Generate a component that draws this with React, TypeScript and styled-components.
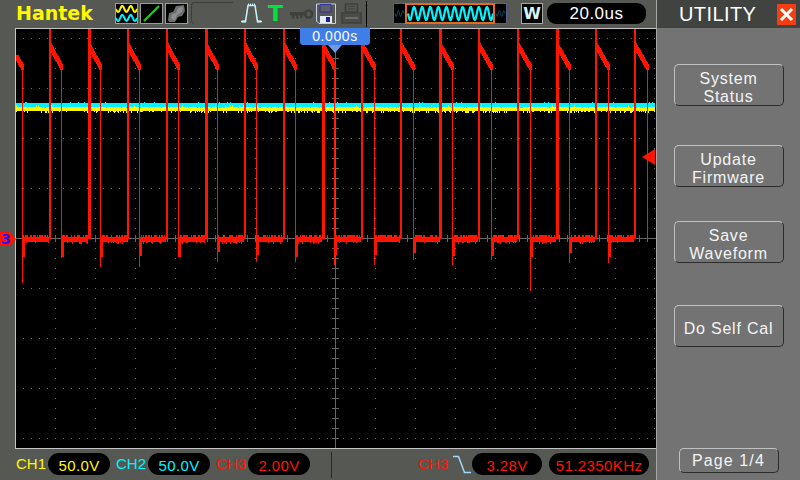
import React from 'react'
import styled, { createGlobalStyle } from 'styled-components'

const bezel = '#565853'
const panel_bg = '#737373'
const panel_head = '#40433f'
const red = '#ff1400'
const cyan = '#00f4ff'
const yellow = '#fff800'
const ui_font = '"Liberation Sans", Arial, sans-serif'

const GlobalStyle = createGlobalStyle`
  html, body {
    margin: 0;
    padding: 0;
    background: ${bezel};
  }
`

const Screen = styled.div`
  width: 800px;
  height: 480px;
  display: flex;
  overflow: hidden;
  font-family: ${ui_font};
`

const Main = styled.div`
  width: 656px;
  height: 480px;
  display: flex;
  flex-direction: column;
  background: ${bezel};
`

const TopBar = styled.div`
  height: 28px;
  box-sizing: border-box;
  padding: 3px 0 4px 16px;
  display: flex;
  align-items: stretch;
`

const Logo = styled.div`
  width: 78px;
  margin-top: -1px;
  color: ${yellow};
  font-family: 'DejaVu Sans', sans-serif;
  font-weight: bold;
  font-size: 19px;
  line-height: 22px;
  white-space: nowrap;
`

const IconBox = styled.div<{ $ml?: number }>`
  width: 23px;
  height: 21px;
  box-sizing: border-box;
  margin-left: ${({ $ml }) => $ml ?? 2}px;
  border: 1px solid #9c9c9c;
  background: #000;
  display: flex;
  align-items: center;
  justify-content: center;
`

const EmptySlot = styled.div`
  width: 42px;
  height: 22px;
  margin: -1px 0 0 3px;
  box-sizing: border-box;
  border: 1px solid #3c3e3b;
  border-width: 1px 0 0 1px;
  border-radius: 4px 0 0 4px;
`

const Glyph = styled.svg<{ $ml: number; $w: number }>`
  width: ${({ $w }) => $w}px;
  height: 21px;
  margin-left: ${({ $ml }) => $ml}px;
  flex: none;
`

const TriggerT = styled.div`
  width: 14px;
  margin-left: 6px;
  color: #00e43c;
  font-family: 'DejaVu Sans', sans-serif;
  font-weight: bold;
  font-size: 22px;
  line-height: 21px;
  text-align: center;
`

const TopSeparator = styled.div`
  width: 1px;
  margin: -2px 0 -3px 4px;
  background: #000;
`

const Overview = styled.div`
  width: 114px;
  height: 21px;
  margin-left: 26px;
  position: relative;
  box-sizing: border-box;
  border: 1px solid #5c5c94;
  background: #000;
`

const OverviewWindow = styled.div`
  position: absolute;
  left: 11px;
  top: -1px;
  width: 90px;
  height: 21px;
  box-sizing: border-box;
  border: 2px solid #e86a20;
`

const ModeBox = styled.div`
  width: 22px;
  height: 21px;
  margin-left: 14px;
  box-sizing: border-box;
  border: 1px solid #a8a8a8;
  background: #000;
  color: #d8f4f4;
  font-family: 'DejaVu Sans', sans-serif;
  font-weight: bold;
  font-size: 16px;
  line-height: 19px;
  text-align: center;
`

const TimePill = styled.div`
  width: 99px;
  height: 21px;
  margin-left: 4px;
  border-radius: 9px;
  background: #000;
  color: #fff;
  font-size: 17px;
  line-height: 21px;
  letter-spacing: 0.5px;
  text-align: center;
`

const Scope = styled.div`
  position: relative;
  height: 421px;
  margin-left: 15px;
  box-sizing: border-box;
  border: 1px solid #c4c4c4;
  border-right: 0;
  background: #000;
`

const ScopeCanvas = styled.svg`
  display: block;
  width: 641px;
  height: 419px;
`

const TimeMarker = styled.div`
  position: absolute;
  left: 284px;
  top: -1px;
  width: 70px;
  height: 17px;
  border-radius: 0 0 3px 3px;
  background: #3f7ee6;
  color: #fff;
  font-size: 14px;
  line-height: 17px;
  letter-spacing: 0.6px;
  text-align: center;

  &::after {
    content: '';
    position: absolute;
    left: 28px;
    top: 17px;
    border-left: 7px solid transparent;
    border-right: 7px solid transparent;
    border-top: 8px solid #6d9ce0;
  }
`

const LevelMarker = styled.div`
  position: absolute;
  left: -16px;
  top: 203px;
  width: 16px;
  height: 14px;
  background: ${red};
  clip-path: polygon(0 0, 62% 0, 100% 50%, 62% 100%, 0 100%);
  color: #1a1aff;
  font-family: 'DejaVu Sans', sans-serif;
  font-weight: bold;
  font-size: 14px;
  line-height: 14px;
  padding-left: 1px;
  box-sizing: border-box;
`

const TriggerArrow = styled.div`
  position: absolute;
  right: 1px;
  top: 120px;
  width: 13px;
  height: 16px;
  background: ${red};
  clip-path: polygon(0 50%, 100% 0, 100% 100%);
`

const BottomBar = styled.div`
  height: 31px;
  box-sizing: border-box;
  padding: 4px 6px 4px 16px;
  display: flex;
  align-items: stretch;
`

const ChannelLabel = styled.div<{ $color: string; $ml?: number }>`
  width: 32px;
  margin-left: ${({ $ml }) => $ml ?? 0}px;
  color: ${({ $color }) => $color};
  font-size: 15px;
  line-height: 22px;
  white-space: nowrap;
`

const ValuePill = styled.div<{ $color: string; $w: number; $ml?: number }>`
  width: ${({ $w }) => $w}px;
  height: 22px;
  margin-left: ${({ $ml }) => $ml ?? 0}px;
  border-radius: 11px;
  background: #000;
  color: ${({ $color }) => $color};
  font-size: 15px;
  line-height: 25px;
  letter-spacing: 0.4px;
  text-align: center;
  white-space: nowrap;
`

const BottomSeparator = styled.div`
  width: 1px;
  margin: -1px 0 -2px 21px;
  background: #2a2a2a;
`

const SlopeIcon = styled.svg`
  width: 20px;
  height: 22px;
  margin-left: 2px;
  flex: none;
`

const SidePanel = styled.div`
  width: 144px;
  height: 480px;
  box-sizing: border-box;
  border-left: 1px solid #a6a6a6;
  background: ${panel_bg};
  display: flex;
  flex-direction: column;
  align-items: center;
`

const PanelHeader = styled.div`
  align-self: stretch;
  height: 28px;
  box-sizing: border-box;
  background: ${panel_head};
  display: flex;
  align-items: center;
  padding-left: 22px;
`

const PanelTitle = styled.div`
  width: 98px;
  color: #fff;
  font-size: 20px;
  letter-spacing: 0.4px;
`

const CloseButton = styled.div`
  width: 19px;
  height: 21px;
  background: #f23e10;
  display: flex;
  align-items: center;
  justify-content: center;
`

const MenuButton = styled.div<{ $top: number }>`
  width: 110px;
  height: 42px;
  margin-top: ${({ $top }) => $top}px;
  padding-top: 5px;
  box-sizing: border-box;
  border: 1px solid #c0c0c0;
  border-right-color: #2c2c2c;
  border-bottom-color: #2c2c2c;
  border-radius: 5px;
  display: flex;
  align-items: center;
  justify-content: center;
  text-align: center;
  color: #f4f4f4;
  font-size: 16px;
  line-height: 18px;
  letter-spacing: 0.8px;
`

const PageButton = styled.div`
  width: 100px;
  height: 25px;
  margin: auto 0 7px;
  box-sizing: border-box;
  border: 1px solid #c0c0c0;
  border-right-color: #2c2c2c;
  border-bottom-color: #2c2c2c;
  border-radius: 5px;
  color: #f4f4f4;
  font-size: 16px;
  line-height: 23px;
  letter-spacing: 1.1px;
  text-align: center;
`

// small seeded generator so the noise on the traces stays the same on every load
const makeRandom = (seed: number) => () => {
  seed = (seed * 16807) % 2147483647
  return seed / 2147483647
}

const PERIOD = 39.05
const FIRST_RISE = 48.5
const FALL_DELAY = 12.6
const UNDERSHOOT = [283, 258, 267, 267, 257, 262, 262, 262, 265, 265, 260, 265, 260, 291, 263, 263]

const rect = (x: number, y: number, w: number, h: number) => `M${x} ${y}h${w}v${h}h${-w}z`

const buildRedTrace = () => {
  const random = makeRandom(4711)
  let d = ''
  for (let k = -1; k < 16; k++) {
    const rise = Math.round(FIRST_RISE + k * PERIOD)
    const fall = Math.round(FIRST_RISE + k * PERIOD + FALL_DELAY)
    const next = Math.round(FIRST_RISE + (k + 1) * PERIOD)

    if (k >= 0) d += rect(rise, 28, k % 3 === 1 ? 3 : 2, 211)

    // decay from the peak down to the falling edge, as a staircase
    const from = Math.max(rise, 16)
    for (let x = from; x < fall; x++) {
      const y = 45 + ((x - rise) / (fall - rise)) * 23
      d += rect(x, Math.round(y) - 2, 3, 6)
    }

    if (fall > 655) continue
    d += rect(fall, 68, 1, 170)
    const low = UNDERSHOOT[k + 1]
    d += rect(fall, 238, 1, low - 238)
    d += rect(fall, 238, 3, Math.min(low, 257) - 238 - Math.floor(random() * 6))

    // flat part with its noise
    for (let x = fall + 1; x < Math.min(next, 655); x++) {
      const top = random() < 0.55 ? 235 : 237
      const roll = random()
      const bottom = roll < 0.1 ? 244 : roll < 0.25 ? 243 : 242
      d += rect(x, top, 1, bottom - top)
    }
  }
  return d
}

const buildBands = () => {
  const random = makeRandom(90210)
  let cyanPath = ''
  let yellowPath = ''
  for (let x = 16; x < 655; x++) {
    const cyanTop = random() < 0.06 ? 102 : 103
    cyanPath += rect(x, cyanTop, 1, 108 - cyanTop)
    const roll = random()
    const yellowTop = roll < 0.04 ? 105 : roll < 0.18 ? 108 : 107
    const spike = random()
    const yellowBottom = spike < 0.12 ? 113 : spike < 0.25 ? 112 : 111
    yellowPath += rect(x, yellowTop, 1, yellowBottom - yellowTop)
  }
  return { cyanPath, yellowPath }
}

const buildGrid = () => {
  let dots = ''
  let axis = rect(16, 238, 640, 1) + rect(335, 29, 1, 419)
  for (let y = 38; y <= 438; y += 50) {
    for (let x = 23; x < 655; x += 8) dots += rect(x, y, 1, 1)
  }
  for (let x = 55; x <= 655; x += 40) {
    for (let y = 38; y <= 440; y += 10) dots += rect(x === 655 ? 654 : x, y, 1, 1)
  }
  for (let x = 23; x < 655; x += 8) axis += rect(x, 235, 1, 7)
  for (let y = 38; y <= 440; y += 10) axis += rect(332, y, 7, 1)
  return { dots, axis }
}

const redTrace = buildRedTrace()
const { cyanPath, yellowPath } = buildBands()
const { dots, axis } = buildGrid()

const sinePath = (x0: number, x1: number, mid: number, amp: number, waves: number) => {
  const points: string[] = []
  for (let x = x0; x <= x1; x += 0.5) {
    const y = mid + amp * Math.sin(((x - x0) / (x1 - x0)) * waves * Math.PI * 2)
    points.push(`${x} ${y.toFixed(2)}`)
  }
  return `M${points.join('L')}`
}

const WaveIcon = () => (
  <svg width="21" height="19" viewBox="0 0 21 19">
    <path d={sinePath(0, 21, 5, 3, 2.5)} fill="none" stroke={yellow} strokeWidth="2" />
    <path d={sinePath(0, 21, 14, 3, 2.5)} fill="none" stroke={cyan} strokeWidth="2" />
  </svg>
)

const LineIcon = () => (
  <svg width="21" height="19" viewBox="0 0 21 19">
    <path d="M3 17L18 2" stroke="#10d010" strokeWidth="2.4" />
  </svg>
)

const BlurIcon = () => (
  <svg width="21" height="19" viewBox="0 0 21 19">
    <path d="M2 16L3 9L7 8L10 2L18 1L19 7L16 12L12 13L9 18L3 18Z" fill="#6e6e6e" />
    <path d="M5 15L6 10L10 9L12 4L17 3L16 8L11 11L9 16Z" fill="#8e8e8e" />
  </svg>
)

const PulseIcon = () => (
  <Glyph $ml={8} $w={21} viewBox="0 0 21 21">
    <path d="M0 18.5H4.5L7 2.5H14L16.5 18.5H21" fill="none" stroke="#c4f0f8" strokeWidth="1.6" />
    <path d="M7.5 0.5V3M9.5 0.5V3M11.5 0.5V3M13.5 0.5V3M2 17V20M4 17V20M17 17V20M19 17V20" stroke="#c4f0f8" strokeWidth="1" />
  </Glyph>
)

const KeyIcon = () => (
  <Glyph $ml={8} $w={23} viewBox="0 0 23 21">
    <circle cx="18.5" cy="11" r="3.5" fill="none" stroke="#3e403d" strokeWidth="2.6" />
    <path d="M0 9H15V12.5H0Z" fill="#3e403d" />
    <path d="M2 12H4.5V15.5H2ZM6 12H8.5V15.5H6ZM10 12H12.5V15H10Z" fill="#3e403d" />
  </Glyph>
)

const FloppyIcon = () => (
  <Glyph $ml={3} $w={20} viewBox="0 0 20 21">
    <path d="M0.5 1H19.5V20.5H3L0.5 18Z" fill="#565853" stroke="#c4d0f0" strokeWidth="1" />
    <path d="M4 1.5H15V9H4Z" fill="#5e6066" stroke="#3030a0" strokeWidth="1" />
    <path d="M4 13H16V20H4Z" fill="#e4ecfc" />
    <path d="M10 14H14V19H10Z" fill="#20208c" />
  </Glyph>
)

const PrinterIcon = () => (
  <Glyph $ml={5} $w={21} viewBox="0 0 21 21">
    <path d="M4.5 1H16.5V9H4.5Z" fill="none" stroke="#3e403d" strokeWidth="1.6" />
    <path d="M7 3.5H14M7 6H14" stroke="#3e403d" strokeWidth="1" />
    <path d="M1 10H20V20H1Z" fill="#4a4c49" stroke="#3e403d" strokeWidth="1.6" />
    <path d="M4 14H17V16H4Z" fill="#6a6c68" />
  </Glyph>
)

const OverviewWave = () => (
  <svg width="112" height="19" viewBox="0 0 112 19" style={{ display: 'block' }}>
    <path d={sinePath(1, 10, 9.5, 3, 2)} fill="none" stroke="#06505a" strokeWidth="1" />
    <path d={sinePath(102, 111, 9.5, 3, 2)} fill="none" stroke="#06505a" strokeWidth="1" />
    <path d={sinePath(14, 99, 9.5, 6.5, 10.5)} fill="none" stroke={cyan} strokeWidth="2.2" />
  </svg>
)

const menuItems = [
  { top: 36, lines: ['System', 'Status'] },
  { top: 39, lines: ['Update', 'Firmware'] },
  { top: 34, lines: ['Save', 'Waveform'] },
  { top: 42, lines: ['Do Self Cal'] }
]

const App: React.FC = () => (
  <>
    <GlobalStyle />
    <Screen>
      <Main>
        <TopBar>
          <Logo>Hantek</Logo>
          <IconBox $ml={21}><WaveIcon /></IconBox>
          <IconBox><LineIcon /></IconBox>
          <IconBox><BlurIcon /></IconBox>
          <EmptySlot />
          <PulseIcon />
          <TriggerT>T</TriggerT>
          <KeyIcon />
          <FloppyIcon />
          <PrinterIcon />
          <TopSeparator />
          <Overview>
            <OverviewWave />
            <OverviewWindow />
          </Overview>
          <ModeBox>W</ModeBox>
          <TimePill>20.0us</TimePill>
        </TopBar>

        <Scope>
          <ScopeCanvas viewBox="16 29 641 419" shapeRendering="crispEdges">
            <path d={dots} fill="#6e6e6e" />
            <path d={axis} fill="#666" />
            <path d={cyanPath} fill={cyan} />
            <path d={yellowPath} fill={yellow} />
            <path d={redTrace} fill={red} />
          </ScopeCanvas>
          <TimeMarker>0.000s</TimeMarker>
          <LevelMarker>3</LevelMarker>
          <TriggerArrow />
        </Scope>

        <BottomBar>
          <ChannelLabel $color={yellow}>CH1</ChannelLabel>
          <ValuePill $color={yellow} $w={62}>50.0V</ValuePill>
          <ChannelLabel $color={cyan} $ml={6}>CH2</ChannelLabel>
          <ValuePill $color={cyan} $w={62}>50.0V</ValuePill>
          <ChannelLabel $color={red} $ml={6}>CH3</ChannelLabel>
          <ValuePill $color={red} $w={62}>2.00V</ValuePill>
          <BottomSeparator />
          <ChannelLabel $color={red} $ml={86}>CH3</ChannelLabel>
          <SlopeIcon viewBox="0 0 20 22">
            <path d="M1 3.5H6.5L12.5 19.5H19" fill="none" stroke="#9fd8f8" strokeWidth="1.5" />
          </SlopeIcon>
          <ValuePill $color={red} $w={70}>3.28V</ValuePill>
          <ValuePill $color={red} $w={100} $ml={7}>51.2350KHz</ValuePill>
        </BottomBar>
      </Main>

      <SidePanel>
        <PanelHeader>
          <PanelTitle>UTILITY</PanelTitle>
          <CloseButton>
            <svg width="15" height="15" viewBox="0 0 15 15">
              <path d="M2 2L13 13M13 2L2 13" stroke="#fff" strokeWidth="3" />
            </svg>
          </CloseButton>
        </PanelHeader>
        {menuItems.map(item => (
          <MenuButton key={item.lines[0]} $top={item.top}>
            <div>
              {item.lines.map(line => (
                <div key={line}>{line}</div>
              ))}
            </div>
          </MenuButton>
        ))}
        <PageButton>Page 1/4</PageButton>
      </SidePanel>
    </Screen>
  </>
)

export default App
